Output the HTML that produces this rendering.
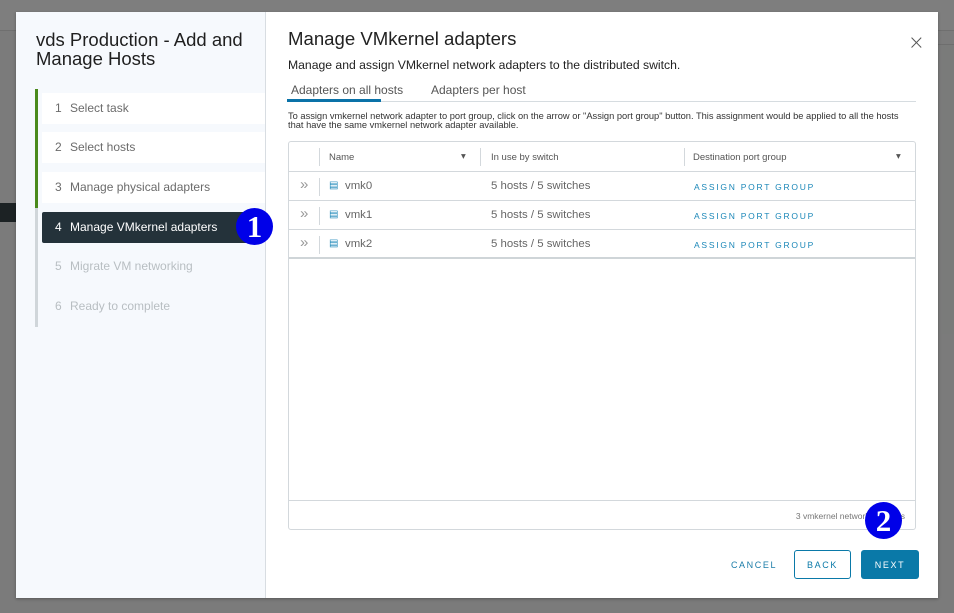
<!DOCTYPE html>
<html><head><style>
*{box-sizing:border-box;margin:0;padding:0}
body{width:954px;height:613px;overflow:hidden;background:#7b7b7b;font-family:"Liberation Sans",sans-serif;position:relative}
.bg1{position:absolute;left:0;top:0;width:954px;height:31px;background:#7e7e7e;border-bottom:1px solid #6f6f6f}
.bgr{position:absolute;left:938px;top:44px;width:16px;height:290px;background:#7a7b7a;border-top:1px solid #6e6e6e}
.bgb{position:absolute;left:0;top:203px;width:20px;height:19px;background:#1c2224}
.modal{position:absolute;left:16px;top:12px;width:922px;height:586px;background:#fff;box-shadow:0 1px 3px rgba(0,0,0,.3)}
.side{position:absolute;left:0;top:0;width:250px;height:586px;background:#f6f9fd;border-right:1px solid #d8dde2}
.side h1{position:absolute;left:20px;top:18px;font-weight:normal;font-size:18.5px;line-height:19px;color:#1f1f1f;width:230px}
.bar{position:absolute;left:19px;top:77px;width:3px;height:238px;background:#d0d6da}
.bar i{display:block;width:3px;height:119px;background:#4a8a1c}
.step{position:absolute;left:26px;width:223px;height:31px;font-size:12px;line-height:31px;color:#6b6b6b;padding-left:13px;white-space:nowrap}
.step b{font-weight:normal;display:inline-block;width:15px}
.act{background:#24323a;color:#fff;border-radius:2px;width:220px}
.dis{color:#b8bec2}
.badge{position:absolute;width:37px;height:37px;border-radius:50%;background:#0000e8;color:#fff;font-size:31px;font-weight:bold;text-align:center;line-height:37px;font-family:"Liberation Serif",serif}
.main{position:absolute;left:272px;top:0}
.t{position:absolute;font-size:18.6px;left:0;top:16px;color:#222;white-space:nowrap}
.sub{position:absolute;top:46px;left:0;font-size:12.2px;color:#222;white-space:nowrap}
.tabs{position:absolute;top:70px;left:-1px;width:629px;height:20px;border-bottom:1px solid #d6dce0;font-size:12px;color:#555}
.tabs span{position:absolute;top:1px}
.tabline{position:absolute;left:0;top:17px;width:94px;height:3px;background:#0a72a8}
.note{position:absolute;top:100px;left:0;font-size:9.3px;line-height:9px;color:#333;width:622px}
.grid{position:absolute;left:0;top:129px;width:628px;height:389px;border:1px solid #d3d8dc;border-radius:3px}
.row{position:absolute;left:0;width:626px;height:29px;border-bottom:1px solid #d3d8dc;font-size:11.4px;color:#666}
.row span{position:absolute;top:8px}
.hdr{height:30px;font-size:9.5px;color:#555}
.sep{position:absolute;width:1px;background:#d3d8dc;top:6px;height:18px}
.link{color:#1b87b8;font-size:8.5px;letter-spacing:1.75px;top:10px!important}
.chev{color:#999;font-size:15px;top:4px!important}
.foot{position:absolute;left:0;top:358px;width:626px;height:29px;border-top:1px solid #d3d8dc;font-size:8.5px;color:#777;text-align:right;padding:10px 10px 0 0}
.btn{position:absolute;top:538px;height:29px;font-size:9px;letter-spacing:1.6px;text-align:center;line-height:31px;border-radius:3px}
</style></head><body>
<div class="bg1"></div><div class="bgr"></div><div class="bgb"></div>
<div class="modal">
 <div class="side">
  <h1>vds Production - Add and Manage Hosts</h1>
  <div class="bar"><i></i></div>
  <div class="step" style="top:81px;background:#fff"><b>1</b>Select task</div>
  <div class="step" style="top:120px;background:#fff"><b>2</b>Select hosts</div>
  <div class="step" style="top:160px;background:#fff"><b>3</b>Manage physical adapters</div>
  <div class="step act" style="top:200px"><b>4</b>Manage VMkernel adapters</div>
  <div class="step dis" style="top:239px"><b>5</b>Migrate VM networking</div>
  <div class="step dis" style="top:279px"><b>6</b>Ready to complete</div>
 </div>
 <div class="main">
  <div class="t">Manage VMkernel adapters</div>
  <div class="sub">Manage and assign VMkernel network adapters to the distributed switch.</div>
  <div class="tabs"><span style="left:4px">Adapters on all hosts</span><span style="left:144px">Adapters per host</span><div class="tabline"></div></div>
  <div class="note">To assign vmkernel network adapter to port group, click on the arrow or "Assign port group" button. This assignment would be applied to all the hosts that have the same vmkernel network adapter available.</div>
  <div class="grid">
   <div class="row hdr" style="top:0">
    <div class="sep" style="left:30px"></div><span style="left:40px;top:10px">Name</span><span style="left:172px;top:9px">▾</span>
    <div class="sep" style="left:191px"></div><span style="left:202px;top:10px">In use by switch</span>
    <div class="sep" style="left:395px"></div><span style="left:404px;top:10px">Destination port group</span><span style="left:607px;top:9px">▾</span>
   </div>
   <div class="row" style="top:30px"><span class="chev" style="left:11px">»</span><div class="sep" style="left:30px"></div><span style="left:40px;color:#1b87b8;font-size:10px">▤</span><span style="left:56px">vmk0</span><span style="left:202px">5 hosts / 5 switches</span><span class="link" style="left:405px">ASSIGN PORT GROUP</span></div>
   <div class="row" style="top:59px"><span class="chev" style="left:11px">»</span><div class="sep" style="left:30px"></div><span style="left:40px;color:#1b87b8;font-size:10px">▤</span><span style="left:56px">vmk1</span><span style="left:202px">5 hosts / 5 switches</span><span class="link" style="left:405px">ASSIGN PORT GROUP</span></div>
   <div class="row" style="top:88px;border-bottom:2px solid #cfd5d8"><span class="chev" style="left:11px">»</span><div class="sep" style="left:30px"></div><span style="left:40px;color:#1b87b8;font-size:10px">▤</span><span style="left:56px">vmk2</span><span style="left:202px">5 hosts / 5 switches</span><span class="link" style="left:405px">ASSIGN PORT GROUP</span></div>
   <div class="foot">3 vmkernel network adapters</div>
  </div>
  <div class="btn" style="left:438px;width:56px;color:#1b7ca8">CANCEL</div>
  <div class="btn" style="left:506px;width:57px;border:1px solid #0a79a8;color:#0a79a8;line-height:29px">BACK</div>
  <div class="btn" style="left:573px;width:58px;background:#0a79a8;color:#fff">NEXT</div>
 </div>
 <div style="position:absolute;left:892px;top:18px;font-size:20px;color:#555;font-family:'DejaVu Sans',sans-serif;font-weight:200">×</div>
</div>
<div class="badge" style="left:236px;top:208px">1</div>
<div class="badge" style="left:865px;top:502px">2</div>
</body></html>
